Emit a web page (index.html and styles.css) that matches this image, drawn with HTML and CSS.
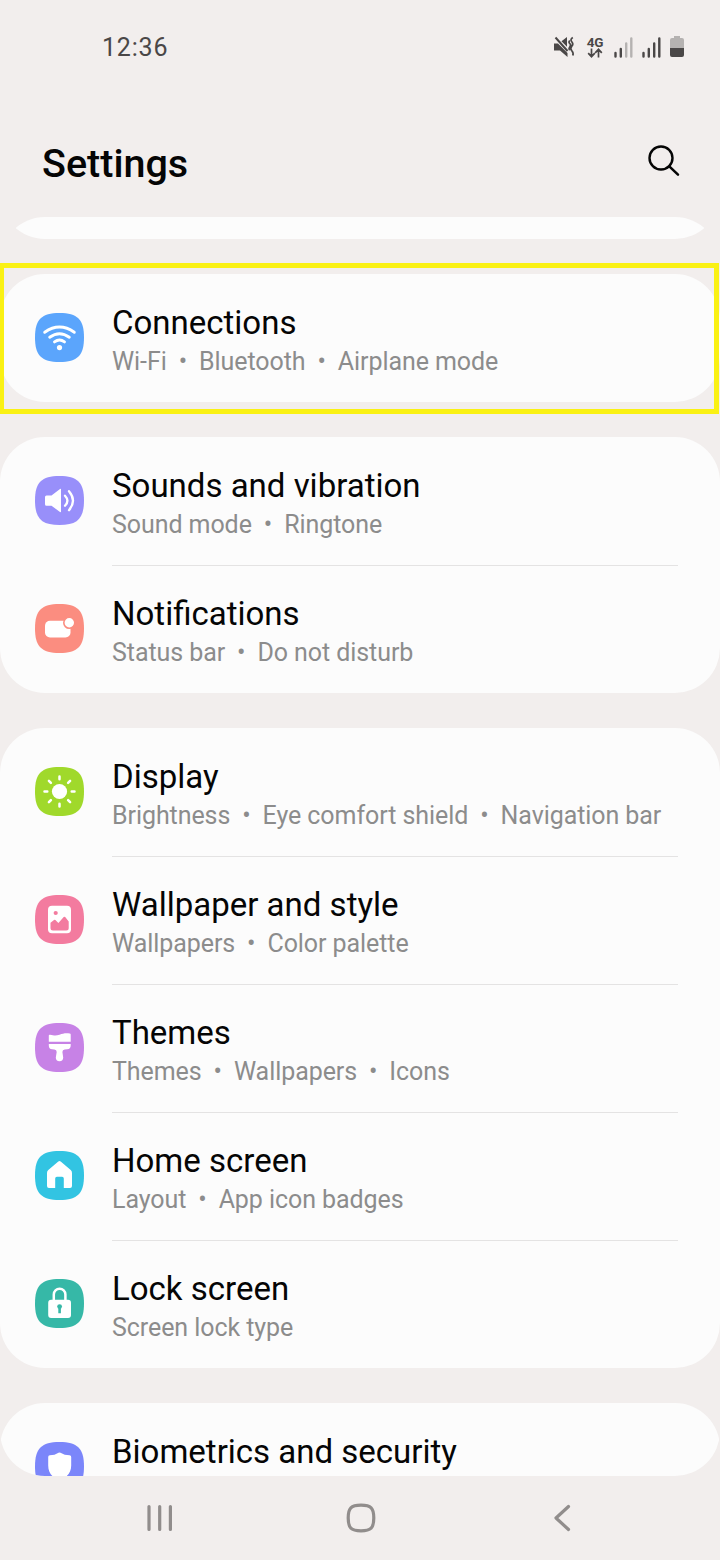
FILE: index.html
```
<!DOCTYPE html>
<html lang="en">
<head>
<meta charset="utf-8">
<title>Settings</title>
<link rel="stylesheet" href="styles.css">
</head>
<body>
<svg class="defs" width="0" height="0" aria-hidden="true">
  <defs><path id="tile" d="M24.5 0C42.5 0 49 6.500 49 24.500S42.500 49 24.500 49 0 42.500 0 24.500 6.500 0 24.500 0Z"/></defs>
</svg>
<div class="screen">
  <div class="status">
    <span class="clock">12:36</span>
    <div class="indicators">
      <svg class="mute" width="22" height="22" viewBox="0 0 22 22">
        <path d="M1 7.500h4L14.500 17v4L7 14.500H1zM8.500 5.300 14 1v9.800z" fill="#4a4747"/>
        <path d="M2.500 1.500 14.500 15" stroke="#4a4747" stroke-width="2"/>
        <path d="M19.800 1.500q-3 2-1 4.200t0 4.500 0 4.500 1 4.800M16.800 4.500q-1.500 1.500 0 3t0 3.500 0 3" fill="none" stroke="#4a4747" stroke-width="1.700"/>
      </svg>
      <div class="network">
        <span>4G</span>
        <svg width="16" height="10" viewBox="0 0 16 10"><path d="M4.500.5v8M1.200 5.200l3.300 3.500 3.300-3.500M11.500 9.500v-8M8.200 4.800l3.300-3.500 3.300 3.500" fill="none" stroke="#4a4747" stroke-width="1.700"/></svg>
      </div>
      <svg class="bars" width="19" height="21" viewBox="0 0 19 21"><path d="M1.500 16v3.500M6.800 12v7.500" class="on"/><path d="M12.200 6.500v13M17.300 1.500v18" class="off"/></svg>
      <svg class="bars" width="19" height="21" viewBox="0 0 19 21"><path d="M1.500 16v3.500M6.800 12v7.500M12.200 6.500v13M17.300 1.500v18" class="on"/></svg>
      <svg class="battery" width="14" height="22" viewBox="0 0 14 22"><path d="M4 0h6v2h2q2 0 2 2v8H0V4q0-2 2-2h2z" fill="#b5b2b1"/><path d="M0 12h14v7q0 2-2 2H2q-2 0-2-2z" fill="#4a4747"/></svg>
    </div>
  </div>
  <header class="header">
    <h1>Settings</h1>
    <svg width="34" height="34" viewBox="0 0 34 34"><circle cx="14" cy="14" r="11.500" fill="none" stroke="#050505" stroke-width="2.400"/><path d="m22.300 22.300 8.700 8.400" stroke="#050505" stroke-width="2.500" stroke-linecap="round"/></svg>
  </header>
  <main class="list">
    <section class="card previous"></section>
    <section class="card">
      <div class="row">
        <svg class="icon blue" viewBox="0 0 49 49"><use href="#tile"/><g fill="none" stroke="#fff" stroke-width="2.900" stroke-linecap="round"><path d="M9.700 19.300q14.800-10.400 29.600 0M14.700 24.200q9.800-7 19.600 0M19.500 28.900q5-3.800 10 0"/></g><circle cx="24.500" cy="34.600" r="2.600" fill="#fff"/></svg>
        <div class="text"><h2>Connections</h2><p><span>Wi-Fi</span><i>•</i><span>Bluetooth</span><i>•</i><span>Airplane mode</span></p></div>
      </div>
    </section>
    <section class="card">
      <div class="row">
        <svg class="icon violet" viewBox="0 0 49 49"><use href="#tile"/><path d="M11.500 19.500h5L25 13q1-.5 1 .5v22q0 1-1 .5l-8.500-6.300h-5q-1.500 0-1.500-1.500V21q0-1.500 1.500-1.500Z" fill="#fff"/><path d="M30 19.700q4.800 5 0 10M34 15.200q8 9.500 0 19" fill="none" stroke="#fff" stroke-width="2.300" stroke-linecap="round"/></svg>
        <div class="text"><h2>Sounds and vibration</h2><p><span>Sound mode</span><i>•</i><span>Ringtone</span></p></div>
      </div>
      <div class="row">
        <svg class="icon coral" viewBox="0 0 49 49"><use href="#tile"/><rect x="10" y="16.800" width="25.500" height="16.700" rx="5" fill="#fff"/><circle cx="34.300" cy="18.700" r="5.500" fill="#fff" stroke="#fb8d80" stroke-width="1.600"/></svg>
        <div class="text"><h2>Notifications</h2><p><span>Status bar</span><i>•</i><span>Do not disturb</span></p></div>
      </div>
    </section>
    <section class="card">
      <div class="row">
        <svg class="icon green" viewBox="0 0 49 49"><use href="#tile"/><circle cx="24.500" cy="24.500" r="7.600" fill="#fff"/><path d="M24.500 9.500v2.800M24.500 36.700v2.800M9.500 24.500h2.800M36.700 24.500h2.800M13.900 13.900l2 2M33.100 33.100l2 2M13.900 35.100l2-2M33.100 15.900l2-2" stroke="#fff" stroke-width="2.500" stroke-linecap="round"/></svg>
        <div class="text"><h2>Display</h2><p><span>Brightness</span><i>•</i><span>Eye comfort shield</span><i>•</i><span>Navigation bar</span></p></div>
      </div>
      <div class="row">
        <svg class="icon pink" viewBox="0 0 49 49"><use href="#tile"/><rect x="13" y="10.700" width="23" height="27.500" rx="4" fill="#fff"/><circle cx="20.700" cy="18" r="2.100"/><path d="M15.500 27.800 19 24.900q.7-.5 1.400.1l3 3 5.300-6q.8-.7 1.500 0l3.500 4.500V33q0 2.500-2.500 2.500H18q-2.500 0-2.500-2.500Z"/></svg>
        <div class="text"><h2>Wallpaper and style</h2><p><span>Wallpapers</span><i>•</i><span>Color palette</span></p></div>
      </div>
      <div class="row">
        <svg class="icon purple" viewBox="0 0 49 49"><use href="#tile"/><path d="M13.800 12.500q0-1 1.200-.8c4 .8 6 1.100 9.500 0s5.500-1.700 10.200-1.200q1 .1 1 1v7.300H13.800ZM13.800 21h21.900v1.500q0 3.500-3.500 3.800l-2.500.2q-2.300.3-2.300 2.500l.8 5.500a3.700 3.700 0 1 1-7.400 0l.9-5.500q0-2.200-2.300-2.500l-2.300-.2q-3.300-.3-3.300-3.800Z" fill="#fff"/></svg>
        <div class="text"><h2>Themes</h2><p><span>Themes</span><i>•</i><span>Wallpapers</span><i>•</i><span>Icons</span></p></div>
      </div>
      <div class="row">
        <svg class="icon cyan" viewBox="0 0 49 49"><use href="#tile"/><path d="M23.300 10.500q1.200-.9 2.400 0l10 8.500q1.300 1.200 1.300 3v13q0 2-2 2h-6.200v-9.500q0-1.700-1.700-1.700h-5.200q-1.700 0-1.700 1.700V37H14q-2 0-2-2V22q0-1.800 1.300-3Z" fill="#fff"/></svg>
        <div class="text"><h2>Home screen</h2><p><span>Layout</span><i>•</i><span>App icon badges</span></p></div>
      </div>
      <div class="row">
        <svg class="icon teal" viewBox="0 0 49 49"><use href="#tile"/><path d="M18.800 23v-7.500a5.800 5.800 0 0 1 11.600 0V23" fill="none" stroke="#fff" stroke-width="2.500"/><rect x="13.200" y="20.800" width="22.800" height="18.200" rx="3" fill="#fff"/><circle cx="24.600" cy="27.600" r="2.400"/><path d="M23.300 28h2.600v6.200h-2.600z"/></svg>
        <div class="text"><h2>Lock screen</h2><p><span>Screen lock type</span></p></div>
      </div>
    </section>
    <section class="card">
      <div class="row">
        <svg class="icon indigo" viewBox="0 0 49 49"><use href="#tile"/><path d="M23.500 10.800q1-.5 2 0 4 2.500 9 2.500 1.700 0 1.700 1.700v8.500c0 8-5.200 12-11.700 15.500-6.500-3.500-11.300-7.500-11.300-15.500V15q0-1.700 1.600-1.700 5 0 8.700-2.500Z" fill="#fff"/></svg>
        <div class="text"><h2>Biometrics and security</h2></div>
      </div>
    </section>
  </main>
  <nav class="nav">
    <svg width="28" height="28" viewBox="0 0 28 28"><path d="M3 2.500v23M13.700 2.500v23M24.400 2.500v23"/></svg>
    <svg class="home" width="30" height="30" viewBox="0 0 30 30"><path d="M15 2.200C25 2.200 27.800 5 27.800 15S25 27.800 15 27.800 2.200 25 2.200 15 5 2.200 15 2.200Z"/></svg>
    <svg width="18" height="28" viewBox="0 0 18 28"><path d="M15.500 2.500 3 14l12.500 11.500"/></svg>
  </nav>
  <div class="highlight"></div>
</div>
</body>
</html>
```
FILE: styles.css
```
* { box-sizing: border-box; }
body { margin: 0; background: #f2eeed; font-family: Roboto, sans-serif; color: #050505; }
h1, h2, p { margin: 0; font-weight: 400; }
svg { display: block; flex: none; }
.defs { position: absolute; }
.screen { position: relative; width: 720px; height: 1560px; display: flex; flex-direction: column; overflow: hidden; }

.status { height: 94px; padding: 0 36px 0 102px; display: flex; justify-content: space-between; align-items: center; color: #4a4747; }
.clock { font-size: 25px; letter-spacing: .8px; }
.indicators { display: flex; align-items: center; }
.network { width: 18px; margin: 0 10px 0 11px; display: flex; flex-direction: column; align-items: center; }
.network span { font-size: 13.500px; line-height: 12px; font-weight: 700; letter-spacing: -.3px; }
.bars { margin-right: 9px; fill: none; stroke-width: 2.400; stroke-linecap: round; }
.on { stroke: #4a4747; }
.off { stroke: #b5b2b1; }

.header { height: 123px; padding: 0 39px 0 42px; display: flex; justify-content: space-between; align-items: center; }
.header h1 { font-size: 39.500px; font-weight: 500; line-height: 46px; padding-top: 16px; }
.header svg { margin-top: 10px; }

.list { height: 1259px; flex: none; overflow: hidden; border-radius: 45px; display: flex; flex-direction: column; gap: 35px; }
.card { flex: none; background: #fcfcfc; border-radius: 45px; }
.previous { height: 128px; margin-top: -106px; }
.row { height: 128px; padding-left: 35px; display: flex; align-items: center; gap: 28px; }
.icon { width: 49px; height: 49px; margin-bottom: 2px; }
.text { width: 566px; height: 128px; padding-top: 29px; }
.row + .row .text { border-top: 1px solid #e4e3e3; padding-top: 28px; }
.text h2 { font-size: 33px; line-height: 40px; white-space: nowrap; }
.text p { display: flex; font-size: 25px; line-height: 30px; letter-spacing: -.07px; padding-top: 4px; color: #8c8c8c; white-space: nowrap; }
.text i { width: 32.300px; text-align: center; font-style: normal; }
.blue { fill: #5ba5fc; }
.violet { fill: #988ffa; }
.coral { fill: #fb8d80; }
.green { fill: #a0d92b; }
.pink { fill: #f37b9f; }
.purple { fill: #c782e6; }
.cyan { fill: #32c4e2; }
.teal { fill: #36b8a7; }
.indigo { fill: #7b86fa; }

.nav { height: 84px; padding: 0 149px 0 146px; display: flex; justify-content: space-between; align-items: center; }
.nav path { fill: none; stroke: #918d8c; stroke-width: 3.200; stroke-linecap: round; stroke-linejoin: round; }
.nav .home { margin-right: 6px; }
.highlight { position: absolute; left: 0; top: 263px; width: 719px; height: 151px; border: 5px solid #faf114; border-left-width: 4px; }
```
